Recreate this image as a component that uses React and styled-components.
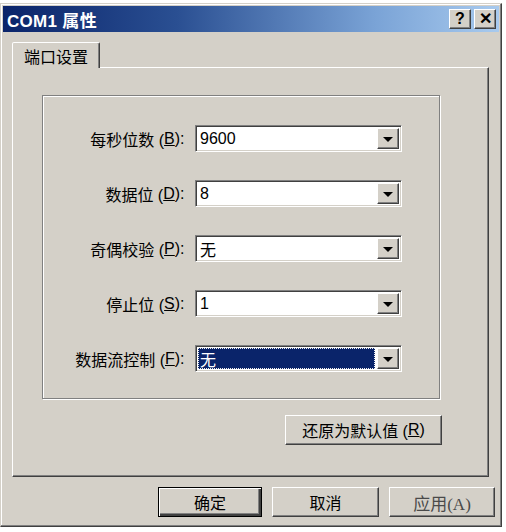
import React from 'react';
import styled, { createGlobalStyle, css } from 'styled-components';

const Global = createGlobalStyle`
  html, body {
    margin: 0;
    background: #fff;
  }
  body {
    font-family: "Liberation Sans", "Noto Sans CJK SC", sans-serif;
    color: #000;
  }
`;

const face = '#d4d0c8';

const raised = css`
  border: 1px solid;
  border-color: #fff #404040 #404040 #fff;
  box-shadow: inset -1px -1px #808080;
`;

const Window = styled.div`
  box-sizing: border-box;
  width: 502px;
  height: 524px;
  margin-top: 3px;
  padding: 2px;
  background: ${face};
  border: 1px solid;
  border-color: ${face} #404040 #404040 ${face};
  box-shadow: inset -1px -1px #808080, inset 1px 1px #fff;
  display: flex;
  flex-direction: column;
`;

const TitleBar = styled.div`
  height: 26px;
  display: flex;
  align-items: center;
  justify-content: space-between;
  padding: 0 3px 0 4px;
  background: linear-gradient(90deg, #0a246a 0%, #2a4f92 35%, #7aa3d6 75%, #a8caee 100%);
`;

const Title = styled.span`
  color: #fff;
  font-weight: bold;
  font-size: 17px;
  letter-spacing: 0.3px;
`;

const TitleButtons = styled.div`
  display: flex;
  gap: 3px;
`;

const TitleButton = styled.div`
  box-sizing: border-box;
  width: 22px;
  height: 20px;
  background: ${face};
  ${raised};
  display: flex;
  align-items: center;
  justify-content: center;
  font-weight: bold;
  font-size: 16px;
  line-height: 1;
`;

const Body = styled.div`
  flex: 1;
  display: flex;
  flex-direction: column;
  padding: 10px 4px 0 9px;
`;

const TabRow = styled.div`
  display: flex;
  height: 25px;
`;

const Tab = styled.div`
  box-sizing: border-box;
  width: 88px;
  height: 26px;
  margin-bottom: -1px;
  position: relative;
  z-index: 1;
  background: ${face};
  border: 1px solid;
  border-bottom: none;
  border-color: #fff #404040 transparent #fff;
  border-radius: 2px 2px 0 0;
  box-shadow: inset -1px 0 #808080;
  display: flex;
  align-items: center;
  justify-content: center;
  font-size: 16px;
`;

const Panel = styled.div`
  box-sizing: border-box;
  width: 477px;
  height: 410px;
  ${raised};
  padding: 27px 0 0 29px;
  display: flex;
  flex-direction: column;
`;

const GroupBox = styled.div`
  box-sizing: border-box;
  width: 398px;
  height: 304px;
  border: 1px solid #808080;
  box-shadow: inset 1px 1px #fff, 1px 1px #fff;
  padding-top: 29px;
  display: grid;
  grid-template-columns: 146px 207px;
  grid-auto-rows: 27px;
  column-gap: 6px;
  row-gap: 28px;
  align-content: start;
`;

const Label = styled.label`
  font-size: 16px;
  display: flex;
  align-items: center;
  justify-content: flex-end;
  white-space: pre;
`;

const Combo = styled.div`
  box-sizing: border-box;
  height: 27px;
  border: 1px solid;
  border-color: #808080 #fff #fff #808080;
  box-shadow: inset 1px 1px #404040, inset -1px -1px ${face};
  background: #fff;
  display: flex;
  padding: 2px;
`;

const Field = styled.div`
  flex: 1;
  display: flex;
  align-items: center;
  font-size: 16px;
  padding-left: 2px;
  ${({ $selected }) =>
    $selected &&
    css`
      background: #0a246a;
      color: #fff;
      outline: 1px dotted #f0f0f0;
      outline-offset: -1px;
      margin-right: 2px;
    `}
`;

const DropButton = styled.div`
  box-sizing: border-box;
  width: 22px;
  background: ${face};
  ${raised};
  display: flex;
  align-items: center;
  justify-content: center;
`;

const Arrow = styled.span`
  width: 0;
  height: 0;
  border-left: 5px solid transparent;
  border-right: 5px solid transparent;
  border-top: 5px solid #000;
  margin-top: 1px;
`;

const RestoreRow = styled.div`
  width: 400px;
  display: flex;
  justify-content: flex-end;
  margin-top: 16px;
`;

const Button = styled.div`
  box-sizing: border-box;
  width: ${({ $w }) => $w || 105}px;
  height: 30px;
  background: ${face};
  ${raised};
  display: flex;
  align-items: center;
  justify-content: center;
  font-size: 16px;
  ${({ $default }) =>
    $default &&
    css`
      border: 1px solid #000;
      box-shadow: inset 1px 1px #fff, inset -2px -2px #404040, inset -2px -2px 0 1px #808080;
    `}
  ${({ $muted }) =>
    $muted &&
    css`
      font-family: "Liberation Serif", "Noto Sans CJK SC", serif;
      color: #4a4a4a;
      font-size: 17px;
    `}
`;

const ButtonRow = styled.div`
  display: flex;
  justify-content: flex-end;
  gap: 10px;
  margin-top: 10px;
`;

const settings = [
  { label: '每秒位数', key: 'B', value: '9600' },
  { label: '数据位', key: 'D', value: '8' },
  { label: '奇偶校验', key: 'P', value: '无' },
  { label: '停止位', key: 'S', value: '1' },
  { label: '数据流控制', key: 'F', value: '无', selected: true },
];

export default function App() {
  return (
    <>
      <Global />
      <Window>
        <TitleBar>
          <Title>COM1 属性</Title>
          <TitleButtons>
            <TitleButton>?</TitleButton>
            <TitleButton>✕</TitleButton>
          </TitleButtons>
        </TitleBar>
        <Body>
          <TabRow>
            <Tab>端口设置</Tab>
          </TabRow>
          <Panel>
            <GroupBox>
              {settings.map((s) => (
                <React.Fragment key={s.key}>
                  <Label>
                    {s.label} (<u>{s.key}</u>):{' '}
                  </Label>
                  <Combo>
                    <Field $selected={s.selected}>{s.value}</Field>
                    <DropButton>
                      <Arrow />
                    </DropButton>
                  </Combo>
                </React.Fragment>
              ))}
            </GroupBox>
            <RestoreRow>
              <Button $w={157}>
                还原为默认值 (<u>R</u>)
              </Button>
            </RestoreRow>
          </Panel>
          <ButtonRow>
            <Button $default $w={104}>确定</Button>
            <Button $w={107}>取消</Button>
            <Button $muted $w={106}>应用(A)</Button>
          </ButtonRow>
        </Body>
      </Window>
    </>
  );
}
